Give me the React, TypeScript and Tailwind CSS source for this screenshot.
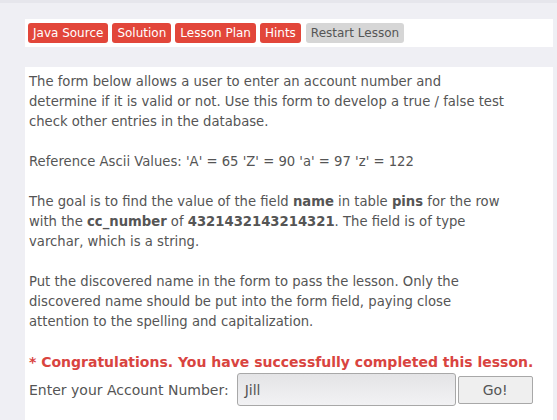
import React from "react";

const tabs = ["Java Source", "Solution", "Lesson Plan", "Hints"];

export default function App() {
  return (
    <div className="h-[420px] w-[557px] overflow-hidden bg-[#efeff4] font-['DejaVu_Sans',sans-serif] text-[#555]">
      <div className="h-[3px] bg-[#e6e6ec]" />
      <div className="ml-[25px] mr-[4px] mt-[16px] flex h-[28px] items-center gap-[4px] bg-white px-[3px]">
        {tabs.map((t) => (
          <span
            key={t}
            className="flex h-[20px] items-center rounded-[3px] bg-[#e2463a] px-[5px] text-[12px] text-white"
          >
            {t}
          </span>
        ))}
        <span className="ml-[1px] flex h-[20px] items-center rounded-[3px] bg-[#d6d6d6] px-[5px] text-[12px] text-[#555]">
          Restart Lesson
        </span>
      </div>

      <div className="ml-[25px] mr-[4px] mt-[20px] bg-white px-[4px] pt-[5px] pb-[20px] text-[13.2px] leading-[20px]">
        <div className="w-[480px]">
          <p>
            The form below allows a user to enter an account number and determine if it is valid or
            not. Use this form to develop a true / false test check other entries in the database.
          </p>
          <br />
          <p>Reference Ascii Values: 'A' = 65 'Z' = 90 'a' = 97 'z' = 122</p>
          <br />
          <p>
            The goal is to find the value of the field <b>name</b> in table <b>pins</b> for the row
            with the <b>cc_number</b> of <b>4321432143214321</b>. The field is of type varchar,
            which is a string.
          </p>
          <br />
          <p>
            Put the discovered name in the form to pass the lesson. Only the discovered name should
            be put into the form field, paying close attention to the spelling and capitalization.
          </p>
          <br />
        </div>
        <div className="text-[14px]">
          <p className="whitespace-nowrap font-bold text-[#d9443f]">
            * Congratulations. You have successfully completed this lesson.
          </p>
          <div className="mt-[1px] flex items-center">
            <span>Enter your Account Number:</span>
            <div className="ml-[8px] flex h-[33px] w-[219px] items-center rounded-[3px] border border-[#a8a8a8] bg-gradient-to-b from-[#e4e4e6] to-[#f2f2f4] px-[7px] text-[#555]">
              Jill
            </div>
            <button className="ml-[2px] h-[28px] w-[75px] rounded-[2px] border border-[#a8a8a8] bg-[#efefef] text-[14px] text-[#555]">
              Go!
            </button>
          </div>
        </div>
      </div>
    </div>
  );
}
